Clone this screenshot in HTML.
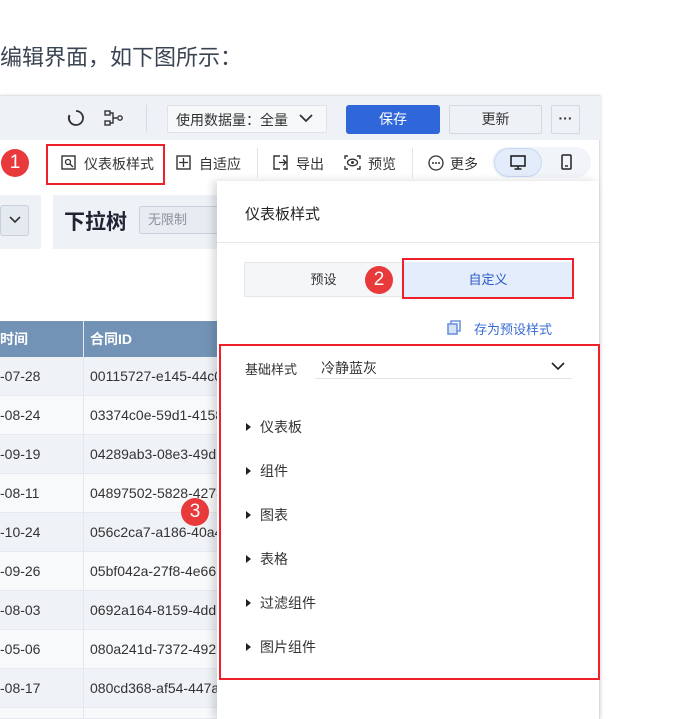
<!DOCTYPE html>
<html><head><meta charset="utf-8">
<style>
*{margin:0;padding:0;box-sizing:border-box}
html,body{width:678px;height:719px;overflow:hidden}
body{background:#fff;position:relative;font-family:"Liberation Sans","Noto Sans CJK SC",sans-serif;color:#333}
.a{position:absolute}
.t{font-size:13px;color:#333;white-space:nowrap}
.badge{position:absolute;width:28px;height:28px;border-radius:50%;background:#e8393b;color:#fff;font-size:19px;line-height:28px;text-align:center}
.red{position:absolute;border:2px solid #f0202a}
.row{position:absolute;left:0;width:217px;height:39px;border-bottom:1px solid #e6eaf0;font-size:14px;color:#333;line-height:38px;overflow:hidden;white-space:nowrap}
.item{position:absolute;left:246px;font-size:14px;color:#333}
.item:before{content:"";display:inline-block;width:0;height:0;border-left:5px solid #222;border-top:4px solid transparent;border-bottom:4px solid transparent;margin-right:9px;vertical-align:1px}
</style></head><body>
<div class="a" style="left:0;top:40px;font-size:22px;color:#3a4453">编辑界面，如下图所示：</div>

<div class="a" style="left:0;top:95px;width:600px;height:624px;background:#fff;border-right:1px solid #dde1e6;box-shadow:1px 0 3px rgba(0,0,0,.12)"></div>
<div class="a" style="left:0;top:95px;width:600px;height:45px;background:#eef1f6;border-top:1px solid #e1e4e8"></div>
<svg class="a" style="left:67px;top:109px" width="18" height="18" viewBox="0 0 18 18"><path d="M9 2a7 7 0 1 1-6.5 4.5M9 16A7 7 0 0 1 2.5 6" fill="none" stroke="#333" stroke-width="1.8"/></svg>
<svg class="a" style="left:104px;top:110px" width="20" height="16" viewBox="0 0 20 16"><rect x="1" y="1" width="5" height="4" fill="none" stroke="#333" stroke-width="1.4"/><rect x="1" y="11" width="5" height="4" fill="none" stroke="#333" stroke-width="1.4"/><path d="M6 3h3v10H6M9 8h4" fill="none" stroke="#333" stroke-width="1.4"/><circle cx="16" cy="8" r="2.2" fill="none" stroke="#333" stroke-width="1.4"/></svg>
<div class="a" style="left:146px;top:105px;width:1px;height:27px;background:#d8dce2"></div>
<div class="a" style="left:167px;top:105px;width:160px;height:28px;border:1px solid #dfe3e8;background:#f7f8fa;border-radius:2px"></div>
<div class="a t" style="left:176px;top:110px;font-size:14px">使用数据量：全量</div>
<svg class="a" style="left:299px;top:113px" width="14" height="10" viewBox="0 0 14 10"><path d="M1 2l6 6 6-6" fill="none" stroke="#333" stroke-width="1.8"/></svg>
<div class="a" style="left:346px;top:105px;width:94px;height:29px;background:#2f66d9;border-radius:3px;color:#fff;font-size:14px;text-align:center;line-height:29px">保存</div>
<div class="a" style="left:449px;top:105px;width:93px;height:29px;background:#eef1f6;border:1px solid #d5d9df;border-radius:2px;font-size:14px;text-align:center;line-height:27px">更新</div>
<div class="a" style="left:551px;top:105px;width:29px;height:29px;border:1px solid #d5d9df;border-radius:2px;font-size:14px;text-align:center;line-height:24px;font-weight:bold">···</div>

<div class="badge" style="left:1px;top:149px">1</div>
<div class="red" style="left:46px;top:144px;width:119px;height:41px"></div>
<svg class="a" style="left:61px;top:155px" width="15" height="15" viewBox="0 0 15 15"><rect x="1" y="1" width="13" height="13" fill="none" stroke="#333" stroke-width="1.4"/><circle cx="7" cy="7" r="2.5" fill="none" stroke="#333" stroke-width="1.3"/><path d="M9 9l3 3" stroke="#333" stroke-width="1.3"/></svg>
<div class="a t" style="left:84px;top:154px;font-size:14px">仪表板样式</div>
<svg class="a" style="left:176px;top:155px" width="15" height="15" viewBox="0 0 15 15"><rect x="1" y="1" width="13" height="13" fill="none" stroke="#333" stroke-width="1.4"/><path d="M7.5 3v9M3 7.5h9" stroke="#333" stroke-width="1.3"/></svg>
<div class="a t" style="left:199px;top:154px;font-size:14px">自适应</div>
<div class="a" style="left:257px;top:148px;width:1px;height:30px;background:#e1e4e8"></div>
<svg class="a" style="left:273px;top:155px" width="17" height="15" viewBox="0 0 17 15"><path d="M7 1H1v13h6M10 1h4v13h-4" fill="none" stroke="#333" stroke-width="1.4"/><path d="M6 7.5h7M10 4.5l3 3-3 3" fill="none" stroke="#333" stroke-width="1.3"/></svg>
<div class="a t" style="left:296px;top:154px;font-size:14px">导出</div>
<svg class="a" style="left:344px;top:155px" width="17" height="15" viewBox="0 0 17 15"><path d="M1 4V1h3M13 1h3v3M16 11v3h-3M4 14H1v-3" fill="none" stroke="#333" stroke-width="1.4"/><ellipse cx="8.5" cy="7.5" rx="5" ry="3.3" fill="none" stroke="#333" stroke-width="1.3"/><circle cx="8.5" cy="7.5" r="1.5" fill="#333"/></svg>
<div class="a t" style="left:368px;top:154px;font-size:14px">预览</div>
<div class="a" style="left:412px;top:148px;width:1px;height:30px;background:#e1e4e8"></div>
<svg class="a" style="left:428px;top:155px" width="16" height="16" viewBox="0 0 16 16"><circle cx="8" cy="8" r="7" fill="none" stroke="#333" stroke-width="1.3"/><circle cx="5" cy="8" r="1" fill="#333"/><circle cx="8" cy="8" r="1" fill="#333"/><circle cx="11" cy="8" r="1" fill="#333"/></svg>
<div class="a t" style="left:450px;top:154px;font-size:14px">更多</div>
<div class="a" style="left:492px;top:147px;width:99px;height:31px;background:#f1f4f8;border-radius:16px"></div>
<div class="a" style="left:494px;top:148px;width:48px;height:29px;background:#e3ecfa;border:1px solid #c9d8f2;border-radius:15px"></div>
<svg class="a" style="left:510px;top:155px" width="16" height="15" viewBox="0 0 16 15"><rect x="1" y="1" width="14" height="10" fill="none" stroke="#222" stroke-width="1.6"/><path d="M8 11v3M4.5 14h7" stroke="#222" stroke-width="1.6"/></svg>
<svg class="a" style="left:561px;top:154px" width="11" height="16" viewBox="0 0 11 16"><rect x="1" y="1" width="9" height="14" rx="1" fill="none" stroke="#222" stroke-width="1.5"/><path d="M4 12h3" stroke="#222" stroke-width="1.4"/></svg>

<div class="a" style="left:0;top:195px;width:41px;height:54px;background:#eef1f6"></div>
<div class="a" style="left:0;top:205px;width:29px;height:31px;background:#e5eaf1;border:1px solid #c8d0db;border-radius:3px"></div>
<svg class="a" style="left:9px;top:216px" width="12" height="8" viewBox="0 0 12 8"><path d="M1 1l5 5 5-5" fill="none" stroke="#333" stroke-width="1.6"/></svg>
<div class="a" style="left:53px;top:195px;width:170px;height:54px;background:#eef1f6"></div>
<div class="a" style="left:64px;top:206px;font-size:21px;font-weight:bold;color:#1e2433">下拉树</div>
<div class="a" style="left:139px;top:206px;width:85px;height:28px;background:#e8ecf2;border:1px solid #c8d0db;border-radius:3px;font-size:13px;color:#8a919c;line-height:26px;padding-left:8px">无限制</div>

<div class="a" style="left:0;top:321px;width:217px;height:36px;background:#7393b6;color:#fff;font-size:14px;font-weight:bold;line-height:36px"><span class="a" style="left:0">时间</span><span class="a" style="left:90px">合同ID</span></div>
<div class="a" style="left:83px;top:321px;width:1px;height:398px;background:#e4e8ee;z-index:2"></div>
<div class="row" style="top:357px;background:#eff2f6"><span class="a" style="left:0">-07-28</span><span class="a" style="left:90px">00115727-e145-44c0</span></div>
<div class="row" style="top:396px;background:#f8f9fb"><span class="a" style="left:0">-08-24</span><span class="a" style="left:90px">03374c0e-59d1-4158</span></div>
<div class="row" style="top:435px;background:#eff2f6"><span class="a" style="left:0">-09-19</span><span class="a" style="left:90px">04289ab3-08e3-49d</span></div>
<div class="row" style="top:474px;background:#f8f9fb"><span class="a" style="left:0">-08-11</span><span class="a" style="left:90px">04897502-5828-4273</span></div>
<div class="row" style="top:513px;background:#eff2f6"><span class="a" style="left:0">-10-24</span><span class="a" style="left:90px">056c2ca7-a186-40a4</span></div>
<div class="row" style="top:552px;background:#f8f9fb"><span class="a" style="left:0">-09-26</span><span class="a" style="left:90px">05bf042a-27f8-4e66</span></div>
<div class="row" style="top:591px;background:#eff2f6"><span class="a" style="left:0">-08-03</span><span class="a" style="left:90px">0692a164-8159-4dd</span></div>
<div class="row" style="top:630px;background:#f8f9fb"><span class="a" style="left:0">-05-06</span><span class="a" style="left:90px">080a241d-7372-492</span></div>
<div class="row" style="top:669px;background:#eff2f6"><span class="a" style="left:0">-08-17</span><span class="a" style="left:90px">080cd368-af54-447a</span></div>
<div class="row" style="top:708px;height:11px;background:#f8f9fb"></div>
<div class="badge" style="left:181px;top:498px;z-index:3">3</div>

<div class="a" style="left:217px;top:181px;width:382px;height:538px;background:#fff;box-shadow:-4px 0 8px rgba(0,0,0,.15);z-index:4">
  <div class="a" style="left:28px;top:22px;font-size:15px;color:#222">仪表板样式</div>
  <div class="a" style="left:0;top:61px;width:382px;height:1px;background:#e4e7eb"></div>
  <div class="a" style="left:27px;top:81px;width:159px;height:35px;background:#f5f6f8;border:1px solid #e4e7eb;font-size:13px;line-height:33px;text-align:center">预设</div>
  <div class="a" style="left:186px;top:81px;width:170px;height:35px;background:#e3edfc;font-size:13px;line-height:35px;text-align:center;color:#2a58c4">自定义</div>
  <div class="red" style="left:185px;top:77px;width:172px;height:41px"></div>
  <div class="badge" style="left:148px;top:85px">2</div>
  <svg class="a" style="left:230px;top:139px" width="14" height="15" viewBox="0 0 14 15"><path d="M4 4V1h9v10h-3" fill="none" stroke="#6e93e0" stroke-width="1.6"/><rect x="1" y="4" width="9" height="10" fill="#d6e2f8" stroke="#6e93e0" stroke-width="1.6"/></svg>
  <div class="a" style="left:257px;top:138px;font-size:13px;color:#3a6bd4">存为预设样式</div>
  <div class="red" style="left:2px;top:163px;width:381px;height:336px"></div>
  <div class="a" style="left:28px;top:178px;font-size:13px;color:#333">基础样式</div>
  <div class="a" style="left:98px;top:177px;width:257px;height:21px;border-bottom:1px solid #e1e4ea;font-size:14px;padding-left:6px">冷静蓝灰</div>
  <svg class="a" style="left:334px;top:181px" width="14" height="9" viewBox="0 0 14 9"><path d="M1 1l6 6 6-6" fill="none" stroke="#222" stroke-width="1.6"/></svg>
</div>
<div style="z-index:5;position:relative">
<div class="item" style="top:417px">仪表板</div>
<div class="item" style="top:461px">组件</div>
<div class="item" style="top:505px">图表</div>
<div class="item" style="top:549px">表格</div>
<div class="item" style="top:593px">过滤组件</div>
<div class="item" style="top:637px">图片组件</div>
</div>
</body></html>
